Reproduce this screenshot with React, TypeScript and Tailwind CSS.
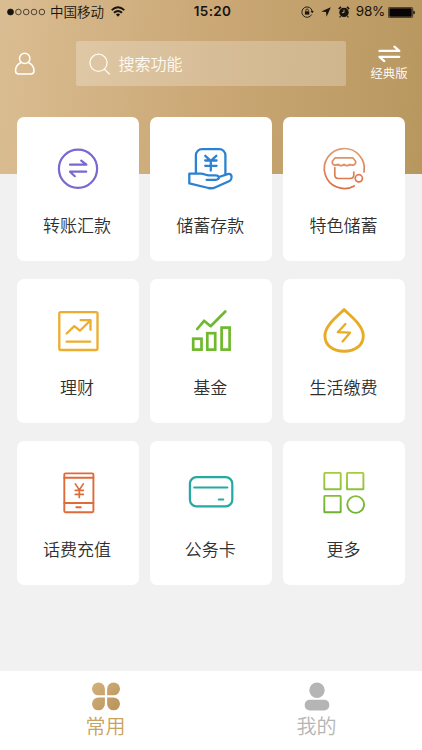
import type { ReactNode } from "react";

const stroke = { fill: "none", strokeLinecap: "round", strokeLinejoin: "round" } as const;

function CardIcon({ color, width = 2, children }: { color: string; width?: number; children: ReactNode }) {
  return (
    <svg className="h-12 w-12 overflow-visible" viewBox="0 0 48 48" {...stroke} stroke={color} strokeWidth={width}>
      {children}
    </svg>
  );
}

const services: { label: string; icon: ReactNode }[] = [
  {
    label: "转账汇款",
    icon: (
      <CardIcon color="#7968cf" width={2.2}>
        <circle cx="24" cy="23.8" r="19.1" />
        <path d="M16 19.7H32.4L27.2 15.6M32.2 26.7H16L20.8 31.2" />
      </CardIcon>
    ),
  },
  {
    label: "储蓄存款",
    icon: (
      <CardIcon color="#2c82d0" width={2.3}>
        <path d="M8.9 28.2V10.2A6 6 0 0 1 14.9 4.2H32.4A6 6 0 0 1 38.4 10.2V29.2" />
        <path d="M18.3 10.8L23.8 15.8L29.3 10.8M18.2 15.5H29.6M18.2 20.8H29.6M23.8 15.8V25.5" />
        <path d="M19.6 34.8H28.5C31 34.8 32.3 33.5 31.8 32C31.3 30.7 30.2 30.4 28.5 30.4H22C18.5 30.4 17.4 28.7 14 28.7H2.3V38.4L21.5 43C24.5 43.6 26.5 43.2 28.5 42.2L42 36.3C44.2 35 45 32.3 44.3 30.5C43.7 28.9 42.1 28.6 40.5 29.1L32 32" />
      </CardIcon>
    ),
  },
  {
    label: "特色储蓄",
    icon: (
      <CardIcon color="url(#coral)" width={1.7}>
        <defs>
          <linearGradient id="coral" x1="0" y1="0" x2="0" y2="48" gradientUnits="userSpaceOnUse">
            <stop stopColor="#e3a077" />
            <stop offset="1" stopColor="#dc693c" />
          </linearGradient>
        </defs>
        <path d="M44 27A20 20 0 1 0 34.2 40.9" />
        <path d="M15.2 12.8H32.8L35.6 16.2V18.1C35 20.2 31.8 20.9 29.8 19.3C28 21.1 25.8 21.1 24 19.3C22.2 21.1 20 21.1 18.2 19.3C16 20.9 12.8 20.2 12.3 18.1V16.2Z" />
        <path d="M14.8 22.5V29.8Q14.8 33.5 18.5 33.5H30Q33.8 33.5 33.8 29.8V27" />
        <circle cx="38.8" cy="33.3" r="3.6" />
      </CardIcon>
    ),
  },
  {
    label: "理财",
    icon: (
      <CardIcon color="#edad2d" width={2.3}>
        <rect x="5.3" y="5.1" width="38.2" height="37.9" rx="1.5" />
        <path d="M12.6 26.5L20.3 19.2L25.9 23.7L36.5 13.2M26.6 13.2H36.5V22.8M12.6 34.7H36.2" />
      </CardIcon>
    ),
  },
  {
    label: "基金",
    icon: (
      <CardIcon color="#6fb92c" width={2.7}>
        <g strokeLinejoin="miter">
          <rect x="6.2" y="31.7" width="8.3" height="10.9" />
          <rect x="20.3" y="26.2" width="7.9" height="16.4" />
          <rect x="34.6" y="20.6" width="8" height="22" />
        </g>
        <path d="M10.2 22L17.1 13.8L23.6 19.2L38.3 4.5" />
      </CardIcon>
    ),
  },
  {
    label: "生活缴费",
    icon: (
      <CardIcon color="#e8ab25" width={2.9}>
        <path d="M24.1 2.6C18 8.7 4.9 18.4 4.9 28.7C4.9 37.8 12.4 44.3 24.1 44.3S43.3 37.8 43.3 28.7C43.3 18.4 30.2 8.7 24.1 2.6Z" />
        <path d="M25.4 17L17.8 25.2L30 25.7L22.6 34.4" strokeWidth="2.3" />
      </CardIcon>
    ),
  },
  {
    label: "话费充值",
    icon: (
      <CardIcon color="#df6b38" width={1.9}>
        <rect x="10.3" y="4.4" width="29.1" height="38.8" rx="1.2" />
        <path d="M10.3 8.8H39.4M10.3 34H39.4M22.3 38.3H26.8" />
        <path d="M21.3 14.9L25.3 20.9L29.3 14.9M21.3 21.4H29.3M21.3 25.4H29.3M25.3 20.9V28.5" strokeWidth="1.7" />
      </CardIcon>
    ),
  },
  {
    label: "公务卡",
    icon: (
      <CardIcon color="#25aaa1" width={2.2}>
        <rect x="2.9" y="8.2" width="42.4" height="29.1" rx="6.5" />
        <path d="M7.3 18.5H40.3M31.9 30.5H36.2" />
      </CardIcon>
    ),
  },
  {
    label: "更多",
    icon: (
      <CardIcon color="url(#lime)" width={1.9}>
        <defs>
          <linearGradient id="lime" x1="0" y1="3" x2="0" y2="44" gradientUnits="userSpaceOnUse">
            <stop stopColor="#a6cd42" />
            <stop offset="1" stopColor="#70b033" />
          </linearGradient>
        </defs>
        <rect x="4.3" y="3.9" width="16.4" height="16.4" rx="0.6" />
        <rect x="27" y="3.9" width="16.4" height="16.4" rx="0.6" />
        <rect x="4.3" y="26.9" width="16.4" height="16.4" rx="0.6" />
        <circle cx="35.7" cy="35.5" r="8.4" />
      </CardIcon>
    ),
  },
];

function StatusBar() {
  return (
    <div className="grid h-6 grid-cols-[1fr_auto_1fr] items-center pl-[7px] pr-[7px] text-[#171310]">
      <div className="flex items-center">
        <svg className="mr-[5px] h-2 w-[38px]" viewBox="0 0 38 8" fill="none" stroke="currentColor" strokeWidth="0.7">
          <circle cx="3.5" cy="4" r="3" fill="currentColor" />
          <circle cx="11.4" cy="4" r="2.8" />
          <circle cx="19.2" cy="4" r="2.8" />
          <circle cx="27" cy="4" r="2.8" />
          <circle cx="34.9" cy="4" r="2.8" />
        </svg>
        <span className="text-[13.5px] leading-none">中国移动</span>
        <svg className="-mt-px ml-[7px] h-[11px] w-[14px]" viewBox="0 0 14 11" fill="none" stroke="currentColor" strokeWidth="1.9">
          <path d="M0.7 4.1Q7 -1.6 13.3 4.1M3 6.7Q7 3.1 11 6.7" />
          <path d="M4.9 8.4Q7 6.7 9.1 8.4L7 10.7Z" fill="currentColor" stroke="none" />
        </svg>
      </div>
      <span className="pl-[3px] font-[Inter] text-[13.5px] font-semibold leading-none tracking-[0.3px]">15:20</span>
      <div className="flex items-center justify-end">
        <svg className="h-3 w-[13px]" viewBox="0 0 13 12" fill="none" stroke="currentColor">
          <path d="M10.7 8.5A5.2 5.2 0 1 1 11.2 5.2" strokeWidth="0.9" />
          <path d="M9.6 5.1H12.8L11.2 7.2Z" fill="currentColor" stroke="none" />
          <rect x="3.9" y="5.3" width="4.4" height="3.3" fill="currentColor" stroke="none" />
          <path d="M4.8 5.3V4.3A1.3 1.3 0 0 1 7.4 4.3V5.3" strokeWidth="0.8" />
        </svg>
        <svg className="ml-[7px] h-[10px] w-[10px]" viewBox="0 0 10 10" fill="currentColor">
          <path d="M9.8 0.2L5.6 9.8L5 5.1L0.2 4.5Z" />
        </svg>
        <svg className="ml-[7px] h-3 w-3" viewBox="0 0 12 12" fill="none" stroke="currentColor">
          <circle cx="6" cy="6.4" r="4.7" fill="currentColor" stroke="none" />
          <path d="M0.8 3L3 0.9M11.2 3L9 0.9" strokeWidth="1.7" />
          <path d="M2.6 10.1L1.6 11.3M9.4 10.1L10.4 11.3" strokeWidth="1.2" />
          <path d="M6 3.7V6.6H3.9" stroke="#cba974" strokeWidth="0.9" />
        </svg>
        <span className="ml-[6px] font-[Inter] text-[13.5px] font-normal leading-none tracking-[-0.25px]">98%</span>
        <svg className="ml-[3px] h-[11px] w-[27px]" viewBox="0 0 27 11">
          <rect x="0.4" y="0.4" width="24.2" height="10.2" rx="1" fill="none" stroke="currentColor" strokeWidth="0.7" />
          <rect x="1.3" y="1.3" width="22.4" height="8.4" rx="0.4" fill="#070507" />
          <path d="M25.3 3.5Q27 4 27 5.5T25.3 7.5Z" fill="currentColor" />
        </svg>
      </div>
    </div>
  );
}

function Header() {
  return (
    <header className="h-[174px] shrink-0 bg-[linear-gradient(95deg,#dabd92_0%,#cba876_48%,#b8975f_100%)]">
      <StatusBar />
      <div className="mt-[17px] flex h-[45px] items-center">
        <svg className="ml-[14px] h-6 w-[22px]" viewBox="0 0 22 24" fill="none" stroke="white" strokeWidth="1.5">
          <circle cx="10.7" cy="6.4" r="5.2" />
          <path d="M7.2 10.5C3.6 12 1.5 15 1.5 18.8Q1.5 22 4.6 22H16.9Q20 22 20 18.8C20 15 17.8 12 14.2 10.5" />
        </svg>
        <div className="ml-10 flex h-[45px] w-[270px] items-center rounded-[2px] bg-white/25 text-[#fffaf0]">
          <svg className="ml-[13px] h-[22px] w-[22px]" viewBox="0 0 22 22" {...stroke} stroke="currentColor" strokeWidth="1.3">
            <circle cx="9.5" cy="9.8" r="8.6" />
            <path d="M15.4 16.2L20.3 21" />
          </svg>
          <span className="-mt-px ml-[7.5px] text-[16px] leading-none">搜索功能</span>
        </div>
        <div className="ml-6 flex h-[45px] w-[38px] flex-col items-center text-white">
          <svg className="mt-[4px] h-[18px] w-[23px] shrink-0" viewBox="0 0 23 18" {...stroke} stroke="currentColor" strokeWidth="2.3">
            <path d="M1.5 5.9H21.3L16.4 1.7M21.3 11.8H1.5L6.3 16.1" />
          </svg>
          <span className="mt-[4px] whitespace-nowrap text-[12.4px] leading-none">经典版</span>
        </div>
      </div>
    </header>
  );
}

function BottomNav() {
  return (
    <nav className="grid h-[79px] shrink-0 grid-cols-2 bg-white">
      <div className="flex flex-col items-center pt-[11px] text-[#c8a35d]">
        <svg className="h-[29px] w-7" viewBox="0 0 28 29">
          <defs>
            <linearGradient id="gold" x1="0" y1="0" x2="28" y2="28" gradientUnits="userSpaceOnUse">
              <stop stopColor="#d4b27c" />
              <stop offset="1" stopColor="#b8935a" />
            </linearGradient>
          </defs>
          <path
            d="M12.9 13.3H6.5A6.45 6.45 0 1 1 12.9 6.8ZM15.1 13.3H21.5A6.45 6.45 0 1 0 15.1 6.8ZM12.9 15.4H6.5A6.45 6.45 0 1 0 12.9 21.9ZM15.1 15.4H21.5A6.45 6.45 0 1 1 15.1 21.9Z"
            fill="url(#gold)"
          />
        </svg>
        <span className="mt-[5px] text-[20px] leading-none">常用</span>
      </div>
      <div className="flex flex-col items-center pt-[11px] text-[#b5b5b5]">
        <svg className="h-[29px] w-[26px]" viewBox="0 0 26 29" fill="currentColor">
          <circle cx="13" cy="8.2" r="7.7" />
          <rect x="0.7" y="17.8" width="24.6" height="10.7" rx="5" />
        </svg>
        <span className="mt-[5px] text-[20px] leading-none">我的</span>
      </div>
    </nav>
  );
}

export default function App() {
  return (
    <div className="flex h-[750px] w-[422px] flex-col overflow-hidden bg-[#f1f1f1] font-['Noto_Sans_CJK_SC',sans-serif] font-[350]">
      <Header />
      <main className="-mt-[57px] grid flex-1 grid-cols-3 content-start gap-x-[11.7px] gap-y-[18px] px-[17px]">
        {services.map(({ label, icon }) => (
          <div key={label} className="flex h-36 flex-col items-center rounded-[7px] bg-white pt-7 text-[#303030]">
            {icon}
            <span className="mt-[23px] pr-[1.5px] text-[17px] leading-none">{label}</span>
          </div>
        ))}
      </main>
      <BottomNav />
    </div>
  );
}
